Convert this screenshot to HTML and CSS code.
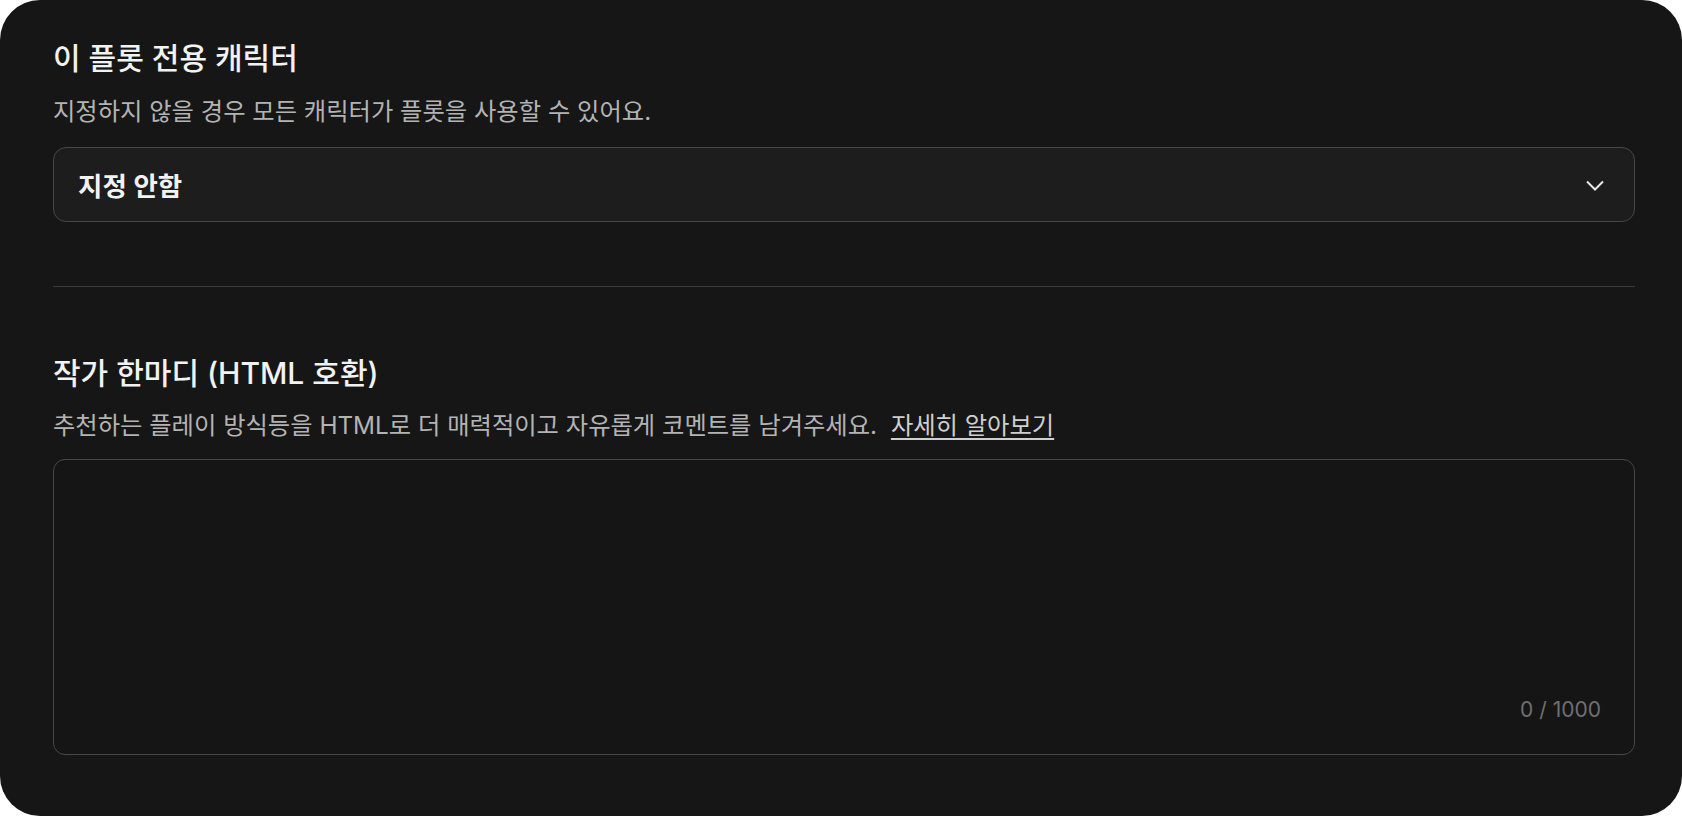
FILE: index.html
```html
<!DOCTYPE html>
<html lang="ko">
<head>
<meta charset="utf-8">
<title>플롯 설정</title>
<link rel="stylesheet" href="styles.css">
</head>
<body>
<div class="card">
  <section class="section">
    <h2 class="title">이 플롯 전용 캐릭터</h2>
    <p class="desc">지정하지 않을 경우 모든 캐릭터가 플롯을 사용할 수 있어요.</p>
    <button class="select" type="button">
      <span class="select-value">지정 안함</span>
      <svg class="chevron" width="24" height="24" viewBox="0 0 24 24" aria-hidden="true">
        <polyline points="4,8.5 12,16.5 20,8.5" fill="none" stroke="#e8e8e8" stroke-width="2" stroke-linejoin="miter"/>
      </svg>
    </button>
  </section>
  <hr class="divider">
  <section class="section">
    <h2 class="title title-second">작가 한마디 (HTML 호환)</h2>
    <p class="desc desc-second">추천하는 플레이 방식등을 HTML로 더 매력적이고 자유롭게 코멘트를 남겨주세요. <a class="link" href="#">자세히 알아보기</a></p>
    <div class="field">
      <textarea class="textarea" aria-label="작가 한마디"></textarea>
      <div class="counter">0 / 1000</div>
    </div>
  </section>
</div>
</body>
</html>
```

FILE: styles.css
```css
html, body {
  margin: 0;
  padding: 0;
  background: #ffffff;
}

body {
  width: 1682px;
  height: 816px;
  overflow: hidden;
}

.card {
  box-sizing: border-box;
  width: 1682px;
  height: 816px;
  background: #161616;
  border-radius: 40px;
  padding: 38px 47px 0 53px;
  display: flex;
  flex-direction: column;
  font-family: "Inter", "Noto Sans CJK KR", sans-serif;
}

.section {
  display: flex;
  flex-direction: column;
}

.title {
  margin: 0;
  font-size: 30px;
  line-height: 40px;
  font-weight: 500;
  color: #f2f2f2;
}

.title-second {
  margin-top: 66px;
}

.desc {
  margin: 16px 0 0;
  font-size: 24.3px;
  line-height: 34px;
  font-weight: 400;
  color: #b3b3b3;
}

.desc-second {
  margin-top: 15px;
}

.link {
  color: #cfcfcf;
  text-decoration: underline;
  text-underline-offset: 4px;
  margin-left: 7px;
}

.select {
  box-sizing: border-box;
  width: 100%;
  height: 75px;
  margin-top: 19px;
  padding: 0 27px 0 24px;
  display: flex;
  align-items: center;
  justify-content: space-between;
  background: #1d1d1d;
  border: 1.5px solid #474747;
  border-radius: 13px;
  font-family: inherit;
  font-size: 26.5px;
  font-weight: 600;
  color: #f2f2f2;
  cursor: pointer;
}

.chevron {
  display: block;
  flex: none;
}

.divider {
  margin: 64px 0 0;
  border: 0;
  height: 1px;
  background: #3a3a3a;
}

.field {
  box-sizing: border-box;
  height: 296px;
  margin-top: 17px;
  display: flex;
  flex-direction: column;
  border: 1.5px solid #474747;
  border-radius: 12px;
  background: #151515;
  padding: 0 33px 29px 24px;
}

.textarea {
  flex: 1;
  background: transparent;
  border: 0;
  outline: none;
  resize: none;
  color: #f2f2f2;
  font-family: inherit;
  font-size: 24px;
  padding: 20px 0 0;
}

.counter {
  text-align: right;
  font-size: 21px;
  line-height: 30px;
  color: #6f6f6f;
}
```
